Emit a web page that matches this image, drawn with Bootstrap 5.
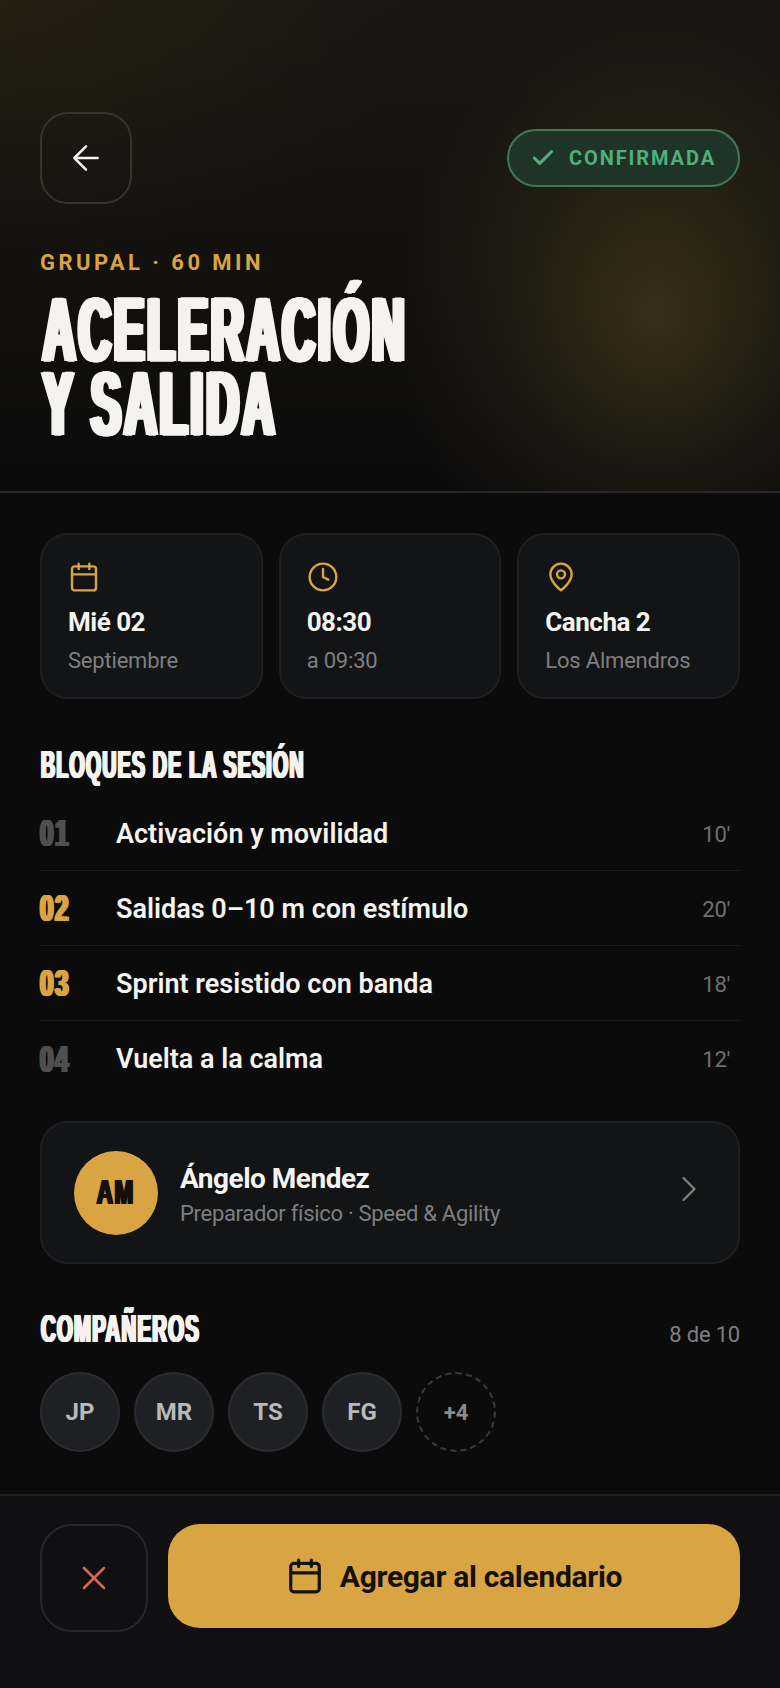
<!DOCTYPE html>
<html lang="es">
<head>
  <meta charset="UTF-8" />
  <meta name="viewport" content="width=device-width, initial-scale=1.0" />
  <title>Aceleración y salida</title>
  <link href="https://cdn.jsdelivr.net/npm/bootstrap@5.3.3/dist/css/bootstrap.min.css" rel="stylesheet">
  <style>
    body {
      background-color: #0b0b0c;
      color: #f4f3ef;
      font-family: Roboto, "Liberation Sans", sans-serif;
    }
    .pantalla { width: 780px; height: 1688px; overflow: hidden; }
    .ico { fill: none; stroke: currentColor; stroke-width: 2; stroke-linecap: round; stroke-linejoin: round; flex: none; display: block; }
    .ico-fino { stroke-width: 1.5; }
    .ico-grueso { stroke-width: 2.8; }
    .condensada { font-family: "Liberation Sans", Arial, sans-serif; font-weight: 700; display: block; transform-origin: left center; white-space: nowrap; }
    .oro { color: #d8a542; }

    .hero {
      height: 493px;
      padding: 112px 40px 0;
      border-bottom: 2px solid #26272a;
      background:
        radial-gradient(ellipse 260px 300px at 655px 315px, rgba(216,165,66,.2) 0, rgba(216,165,66,.07) 55%, rgba(216,165,66,0) 100%),
        radial-gradient(ellipse 420px 260px at 0 0, rgba(90,60,20,.2) 0, rgba(90,60,20,0) 100%),
        linear-gradient(180deg, #1a1711 0, #14120e 45%, #0b0b0c 100%);
    }
    .btn-atras { width: 92px; height: 92px; border: 2px solid #37342c; border-radius: 28px; color: #f4f3ef; padding: 0; background: transparent; }
    .estado {
      height: 58px; width: 233px; border: 2px solid #3d7a58; border-radius: 29px; background: #1f3327;
      color: #4fb07c; font-size: 20px; font-weight: 700; letter-spacing: 1.9px; padding-left: 21px; gap: 13px;
    }
    .antetitulo { color: #d8a542; font-size: 22px; font-weight: 700; letter-spacing: 3.45px; line-height: 26px; margin: 46px 0 0; }
    .titulo {
      margin: 17px 0 0 3px; color: #f4f3ef; font-size: 91px; line-height: 74px; letter-spacing: 7px; transform: scaleX(.49);
      -webkit-text-stroke: 1.5px #f4f3ef;
      text-shadow: 2px 0 0 #f4f3ef, -2px 0 0 #f4f3ef, 4px 0 0 #f4f3ef, -4px 0 0 #f4f3ef, 6.5px 0 0 #f4f3ef, -6.5px 0 0 #f4f3ef;
    }

    .contenido { padding: 40px 40px 0; }
    .tarjeta-dato { background: #131416; border: 2px solid #1e1f22; border-radius: 28px; height: 166px; padding: 26px; color: #f4f3ef; flex: 1 1 0; min-width: 0; }
    .tarjeta-dato .ico { stroke-width: 1.8; }
    .dato-fuerte { font-size: 26px; font-weight: 700; line-height: 32px; margin-top: 13px; letter-spacing: -.5px; }
    .dato-suave { font-size: 22px; color: #7f7f7f; line-height: 28px; margin-top: 9px; letter-spacing: -.2px; }
    .seccion { margin: 44px 0 9px 1px; }
    .seccion-sin-margen { margin: 0 0 0 1px; }
    .seccion .condensada, .seccion-sin-margen .condensada {
      color: #f4f3ef; font-size: 39px; line-height: 44px; letter-spacing: 2.5px; transform: scaleX(.5);
      text-shadow: 1px 0 0 #f4f3ef, -1px 0 0 #f4f3ef, 2.4px 0 0 #f4f3ef, -2.4px 0 0 #f4f3ef;
    }
    .seccion-sin-margen .condensada { transform: scaleX(.52); }

    .fila-bloque { background: transparent; color: #f4f3ef; height: 75px; padding: 2px 10px 0 0; border-color: #1a1b1d; border-width: 0 0 2px; }
    .fila-bloque:last-child { border-bottom: 0; }
    .num-bloque { width: 76px; flex: none; color: #4f4f4f; }
    .num-bloque .condensada { font-size: 36px; letter-spacing: 2.5px; transform: scaleX(.67); text-shadow: 1px 0 0 currentColor, -1px 0 0 currentColor, 2.2px 0 0 currentColor, -2.2px 0 0 currentColor; }
    .num-bloque.oro { color: #d8a542; }
    .nombre-bloque { font-size: 27px; font-weight: 600; }
    .minutos { font-size: 22px; color: #6f6f6f; letter-spacing: -.3px; }

    .tarjeta-coach { background: #131416; border: 2px solid #1e1f22; border-radius: 28px; height: 143px; margin-top: 25px; padding: 0 27px 0 32px; color: #f4f3ef; }
    .avatar-coach { width: 84px; height: 84px; background: #d8a542; color: #14100a; flex: none; }
    .avatar-coach .condensada { font-size: 35px; letter-spacing: 2.5px; transform: scaleX(.64); transform-origin: center; text-shadow: 1px 0 0 #14100a, -1px 0 0 #14100a, 2px 0 0 #14100a, -2px 0 0 #14100a; }
    .coach-texto { margin: 4px 0 0 22px; }
    .coach-nombre { font-size: 28px; font-weight: 700; line-height: 34px; letter-spacing: -.5px; }
    .coach-rol { font-size: 22px; color: #7f7f7f; line-height: 28px; letter-spacing: -.3px; margin-top: 4px; }
    .flecha-coach { color: #7f7f7f; stroke-width: 1.3; margin-top: -8px; }
    .cupos { font-size: 22px; color: #7f7f7f; line-height: 32px; letter-spacing: -.2px; }
    .circulo { width: 80px; height: 80px; flex: none; background: #1f2023; border: 2px solid #2b2c2f; color: #b9b9b9; font-size: 24px; font-weight: 700; }
    .circulo-mas { background: transparent; border: 2px dashed #3a3a3a; color: #8a8a8a; font-size: 22px; }
    .fila-companeros { margin-top: 43px; }
    .circulos { gap: 14px; margin-top: 21px; }

    .pie { height: 194px; background: #101013; border-top: 2px solid #1e1f22; padding: 28px 40px 0; gap: 20px; }
    .btn-cancelar { width: 108px; height: 108px; border: 2px solid #26272a; border-radius: 32px; color: #d9694f; padding: 0; background: transparent; flex: none; }
    .btn-agregar { height: 104px; background: #d8a542; border: 0; border-radius: 32px; color: #14100a; font-size: 30px; font-weight: 700; letter-spacing: -.3px; }
    .btn-agregar:hover, .btn-cancelar:hover, .btn-atras:hover { background: #d8a542; color: #14100a; }
  </style>
</head>
<body>
  <div class="pantalla d-flex flex-column">

    <!-- Cabecera -->
    <header class="hero">
      <div class="d-flex justify-content-between align-items-center">
        <button class="btn btn-atras d-flex align-items-center justify-content-center" aria-label="Volver">
          <svg class="ico ico-fino" width="40" height="40" viewBox="0 0 24 24"><path d="M19 12H5M12 19l-7-7 7-7"/></svg>
        </button>
        <span class="estado d-inline-flex align-items-center">
          <svg class="ico ico-grueso" width="26" height="26" viewBox="0 0 24 24"><path d="M20 6 9 17l-5-5"/></svg>
          CONFIRMADA
        </span>
      </div>
      <p class="antetitulo">GRUPAL · 60 MIN</p>
      <h1 class="titulo condensada">ACELERACIÓN<br>Y SALIDA</h1>
    </header>

    <main class="contenido flex-grow-1">
      <!-- Datos -->
      <div class="d-flex gap-3">
        <div class="card tarjeta-dato">
          <svg class="ico oro" width="32" height="32" viewBox="0 0 24 24"><rect x="3" y="4" width="18" height="18" rx="2"/><path d="M16 2v4M8 2v4M3 10h18"/></svg>
          <div class="dato-fuerte">Mié 02</div>
          <div class="dato-suave">Septiembre</div>
        </div>
        <div class="card tarjeta-dato">
          <svg class="ico oro" width="32" height="32" viewBox="0 0 24 24"><circle cx="12" cy="12" r="10"/><path d="M12 6v6l4 2"/></svg>
          <div class="dato-fuerte">08:30</div>
          <div class="dato-suave">a 09:30</div>
        </div>
        <div class="card tarjeta-dato">
          <svg class="ico oro" width="32" height="32" viewBox="0 0 24 24"><path d="M20 10c0 6-8 12-8 12s-8-6-8-12a8 8 0 0 1 16 0Z"/><circle cx="12" cy="10" r="3"/></svg>
          <div class="dato-fuerte">Cancha 2</div>
          <div class="dato-suave">Los Almendros</div>
        </div>
      </div>

      <!-- Bloques -->
      <h2 class="seccion"><span class="condensada">BLOQUES DE LA SESIÓN</span></h2>
      <ul class="list-group list-group-flush">
        <li class="list-group-item fila-bloque d-flex align-items-center">
          <span class="num-bloque"><span class="condensada">01</span></span>
          <span class="nombre-bloque flex-grow-1">Activación y movilidad</span>
          <span class="minutos">10′</span>
        </li>
        <li class="list-group-item fila-bloque d-flex align-items-center">
          <span class="num-bloque oro"><span class="condensada">02</span></span>
          <span class="nombre-bloque flex-grow-1">Salidas 0–10 m con estímulo</span>
          <span class="minutos">20′</span>
        </li>
        <li class="list-group-item fila-bloque d-flex align-items-center">
          <span class="num-bloque oro"><span class="condensada">03</span></span>
          <span class="nombre-bloque flex-grow-1">Sprint resistido con banda</span>
          <span class="minutos">18′</span>
        </li>
        <li class="list-group-item fila-bloque d-flex align-items-center">
          <span class="num-bloque"><span class="condensada">04</span></span>
          <span class="nombre-bloque flex-grow-1">Vuelta a la calma</span>
          <span class="minutos">12′</span>
        </li>
      </ul>

      <!-- Preparador -->
      <div class="card tarjeta-coach flex-row align-items-center">
        <div class="avatar-coach rounded-circle d-flex align-items-center justify-content-center"><span class="condensada">AM</span></div>
        <div class="coach-texto flex-grow-1">
          <div class="coach-nombre">Ángelo Mendez</div>
          <div class="coach-rol">Preparador físico · Speed &amp; Agility</div>
        </div>
        <svg class="ico flecha-coach" width="44" height="44" viewBox="0 0 24 24"><path d="m9 18 6-6-6-6"/></svg>
      </div>

      <!-- Companeros -->
      <div class="fila-companeros d-flex justify-content-between align-items-end">
        <h2 class="seccion-sin-margen"><span class="condensada">COMPAÑEROS</span></h2>
        <span class="cupos">8 de 10</span>
      </div>
      <div class="circulos d-flex">
        <div class="circulo rounded-circle d-flex align-items-center justify-content-center">JP</div>
        <div class="circulo rounded-circle d-flex align-items-center justify-content-center">MR</div>
        <div class="circulo rounded-circle d-flex align-items-center justify-content-center">TS</div>
        <div class="circulo rounded-circle d-flex align-items-center justify-content-center">FG</div>
        <div class="circulo circulo-mas rounded-circle d-flex align-items-center justify-content-center">+4</div>
      </div>
    </main>

    <!-- Acciones -->
    <footer class="pie d-flex align-items-start">
      <button class="btn btn-cancelar d-flex align-items-center justify-content-center" aria-label="Cancelar">
        <svg class="ico ico-fino" width="40" height="40" viewBox="0 0 24 24"><path d="M18 6 6 18M6 6l12 12"/></svg>
      </button>
      <button class="btn btn-agregar flex-grow-1 d-flex align-items-center justify-content-center gap-3">
        <svg class="ico" width="38" height="38" viewBox="0 0 24 24"><rect x="3" y="4" width="18" height="18" rx="2"/><path d="M16 2v4M8 2v4M3 10h18"/></svg>
        Agregar al calendario
      </button>
    </footer>
  </div>

  <script src="https://cdn.jsdelivr.net/npm/bootstrap@5.3.3/dist/js/bootstrap.bundle.min.js"></script>
</body>
</html>
